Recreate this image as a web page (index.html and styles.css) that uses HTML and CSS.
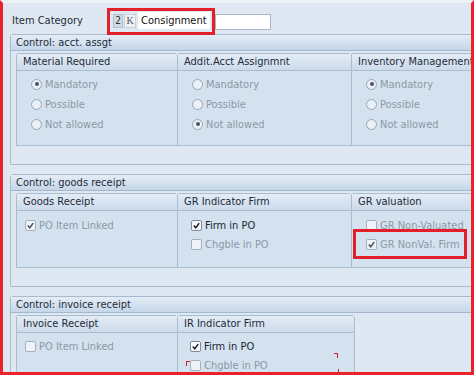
FILE: index.html
```html
<!DOCTYPE html>
<html>
    <head>
        <meta charset="utf-8">
        <title>Item Category</title>
        <link rel="stylesheet" href="styles.css">
    </head>
    <body>
        <div class="frame">
            <div class="top">
                <div class="lbl">Item Category</div>
                <span class="key">2</span>
                <span class="key_k">K</span>
                <span class="fld_txt">Consignment</span>
                <span class="fld_empty"></span>
            </div>

            <div class="sect sect_acct">
                <div class="sect_head">Control: acct. assgt</div>
                <div class="groups">
                    <div class="grp grp_a">
                        <div class="grp_head">Material Required</div>
                        <div class="grp_body radios">
                            <div class="row"><span class="rb on"></span>Mandatory</div>
                            <div class="row"><span class="rb"></span>Possible</div>
                            <div class="row"><span class="rb"></span>Not allowed</div>
                        </div>
                    </div>
                    <div class="grp grp_b">
                        <div class="grp_head">Addit.Acct Assignmnt</div>
                        <div class="grp_body radios">
                            <div class="row"><span class="rb"></span>Mandatory</div>
                            <div class="row"><span class="rb"></span>Possible</div>
                            <div class="row"><span class="rb on"></span>Not allowed</div>
                        </div>
                    </div>
                    <div class="grp grp_c">
                        <div class="grp_head">Inventory Management</div>
                        <div class="grp_body radios">
                            <div class="row"><span class="rb on"></span>Mandatory</div>
                            <div class="row"><span class="rb"></span>Possible</div>
                            <div class="row"><span class="rb"></span>Not allowed</div>
                        </div>
                    </div>
                </div>
            </div>

            <div class="sect sect_gr">
                <div class="sect_head">Control: goods receipt</div>
                <div class="groups">
                    <div class="grp grp_a">
                        <div class="grp_head">Goods Receipt</div>
                        <div class="grp_body checks ind_a">
                            <div class="row"><span class="cb on"><svg viewBox="0 0 10 10"><polyline points="2,5 4.2,7.5 8,2.3"/></svg></span>PO Item Linked</div>
                        </div>
                    </div>
                    <div class="grp grp_b">
                        <div class="grp_head">GR Indicator Firm</div>
                        <div class="grp_body checks ind_b">
                            <div class="row live"><span class="cb on"><svg viewBox="0 0 10 10"><polyline points="2,5 4.2,7.5 8,2.3"/></svg></span>Firm in PO</div>
                            <div class="row"><span class="cb"></span>Chgble in PO</div>
                        </div>
                    </div>
                    <div class="grp grp_c">
                        <div class="grp_head">GR valuation</div>
                        <div class="grp_body checks ind_c">
                            <div class="row"><span class="cb"></span>GR Non-Valuated</div>
                            <div class="row"><span class="cb on"><svg viewBox="0 0 10 10"><polyline points="2,5 4.2,7.5 8,2.3"/></svg></span>GR NonVal. Firm</div>
                        </div>
                    </div>
                </div>
            </div>

            <div class="sect sect_ir">
                <div class="sect_head">Control: invoice receipt</div>
                <div class="groups">
                    <div class="grp grp_a">
                        <div class="grp_head">Invoice Receipt</div>
                        <div class="grp_body checks ind_a">
                            <div class="row"><span class="cb"></span>PO Item Linked</div>
                        </div>
                    </div>
                    <div class="grp grp_d">
                        <div class="grp_head">IR Indicator Firm</div>
                        <div class="grp_body checks ind_d">
                            <div class="row live"><span class="cb on"><svg viewBox="0 0 10 10"><polyline points="2,5 4.2,7.5 8,2.3"/></svg></span>Firm in PO</div>
                            <div class="row"><span class="cb"></span>Chgble in PO</div>
                        </div>
                    </div>
                </div>
            </div>

            <!-- annotation marks drawn over the screen -->
            <div class="mark mark_top"></div>
            <div class="mark mark_gr"></div>
            <div class="tick tick_l"></div>
            <div class="tick tick_r"></div>
            <div class="tick tick_v"></div>
        </div>
    </body>
</html>
```
FILE: styles.css
```css
html, body {
    margin:0;
    padding:0;
}
body {
    width:474px;
    height:375px;
    overflow:hidden;
    background:#dfe8f2;
    font-family:"DejaVu Sans Condensed", "DejaVu Sans", sans-serif;
    font-size:11px;
    color:#1e2b39;
}
.frame {
    position:relative;
    width:474px;
    height:375px;
    box-sizing:border-box;
    border-left:3px solid #e8232b;
    border-right:3px solid #e8232b;
    border-bottom:3px solid #e8232b;
    border-top:3px solid #edf2f7;
    background:#dfe8f2;
    overflow:hidden;
}
.top {
    height:31px;
    box-sizing:border-box;
    padding:9px 0 0 9px;
    display:flex;
    align-items:flex-start;
}
.lbl {
    width:101px;
    line-height:17px;
}
.key {
    width:10px;
    height:14px;
    margin-top:2px;
    box-sizing:border-box;
    border:1px solid #b3c1cf;
    background:#cfdae6;
    text-align:center;
    line-height:12px;
    font-size:10px;
    color:#333;
}
.key_k {
    width:12px;
    height:14px;
    margin:2px 0 0 1px;
    box-sizing:border-box;
    border:1px solid #c7d2dc;
    background:#eef1f4;
    text-align:center;
    line-height:12px;
    font-family:"Liberation Serif", serif;
    font-size:10px;
    color:#555;
}
.fld_txt {
    width:72px;
    height:17px;
    margin-left:2px;
    box-sizing:border-box;
    background:#fff;
    padding-left:3px;
    line-height:17px;
    color:#111;
}
.fld_empty {
    width:56px;
    height:16px;
    margin:2px 0 0 5px;
    box-sizing:border-box;
    border:1px solid #a9b8c7;
    background:#fff;
}
.sect {
    margin-left:7px;
    width:480px;
    box-sizing:border-box;
    border:1px solid #a7bbcf;
    border-radius:3px 0 0 0;
    background:#dde8f3;
}
.sect_gr, .sect_ir {
    margin-top:9px;
}
.sect_head {
    height:15px;
    line-height:15px;
    padding-left:5px;
    border-bottom:1px solid #a3b8cd;
    background:linear-gradient(#e4edf6, #c5d6e8);
}
.groups {
    display:flex;
    padding:2px 0 18px 5px;
}
.grp {
    box-sizing:border-box;
    border:1px solid #a9bcd0;
    border-right:none;
    border-radius:3px 3px 0 0;
    background:#d4e2f0;
}
.grp_a { width:161px; }
.grp_b { width:174px; }
.grp_c { flex:1; }
.grp_d { width:178px; border-right:1px solid #a9bcd0; }
.sect_acct .grp { height:93px; }
.sect_gr .grp { height:75px; }
.sect_ir .grp { height:80px; }
.grp_head {
    height:16px;
    line-height:16px;
    padding-left:6px;
    border-bottom:1px solid #a9bcd0;
    background:linear-gradient(#e3ecf6, #ccdaea);
    white-space:nowrap;
}
.grp_body {
    color:#8c98a5;
}
.radios {
    padding:3px 0 0 14px;
}
.radios .row {
    height:20px;
    display:flex;
    align-items:center;
}
.checks {
    padding-top:5px;
}
.checks .row {
    height:19px;
    display:flex;
    align-items:center;
}
.ind_a { padding-left:8px; }
.ind_b { padding-left:13px; }
.ind_c { padding-left:14px; }
.ind_d { padding-left:12px; }
.sect_ir .checks { padding-top:4px; }
.row.live {
    color:#1b2533;
}
.rb {
    width:11px;
    height:11px;
    box-sizing:border-box;
    border:1px solid #98a6b4;
    border-radius:50%;
    background:#e9f0f7;
    margin-right:3px;
    position:relative;
}
.rb.on:after {
    content:"";
    position:absolute;
    left:2.5px;
    top:2.5px;
    width:4px;
    height:4px;
    border-radius:50%;
    background:#4b5563;
}
.cb {
    width:11px;
    height:11px;
    box-sizing:border-box;
    border:1px solid #a3b0bd;
    border-radius:2px;
    background:#eef3f8;
    margin-right:3px;
    display:flex;
}
.live .cb {
    border-color:#7d8c9b;
    background:#f7f9fb;
}
.cb svg {
    width:9px;
    height:9px;
}
.cb polyline {
    fill:none;
    stroke:#4a4f57;
    stroke-width:1.6;
}
.live .cb polyline {
    stroke:#1a1f26;
}
.mark {
    position:absolute;
    box-sizing:border-box;
    border:3px solid #e3202a;
}
.mark_top {
    left:104px;
    top:5px;
    width:108px;
    height:27px;
}
.mark_gr {
    left:350px;
    top:226px;
    width:114px;
    height:30px;
}
.tick {
    position:absolute;
    border-color:#c8202a;
    border-style:solid;
    border-width:0;
}
.tick_l {
    left:183px;
    top:358px;
    width:3px;
    height:4px;
    border-top-width:1px;
    border-left-width:1px;
}
.tick_r {
    left:331px;
    top:350px;
    width:3px;
    height:4px;
    border-top-width:1px;
    border-right-width:1px;
}
.tick_v {
    left:335px;
    top:366px;
    width:0;
    height:6px;
    border-left-width:1px;
}
```
